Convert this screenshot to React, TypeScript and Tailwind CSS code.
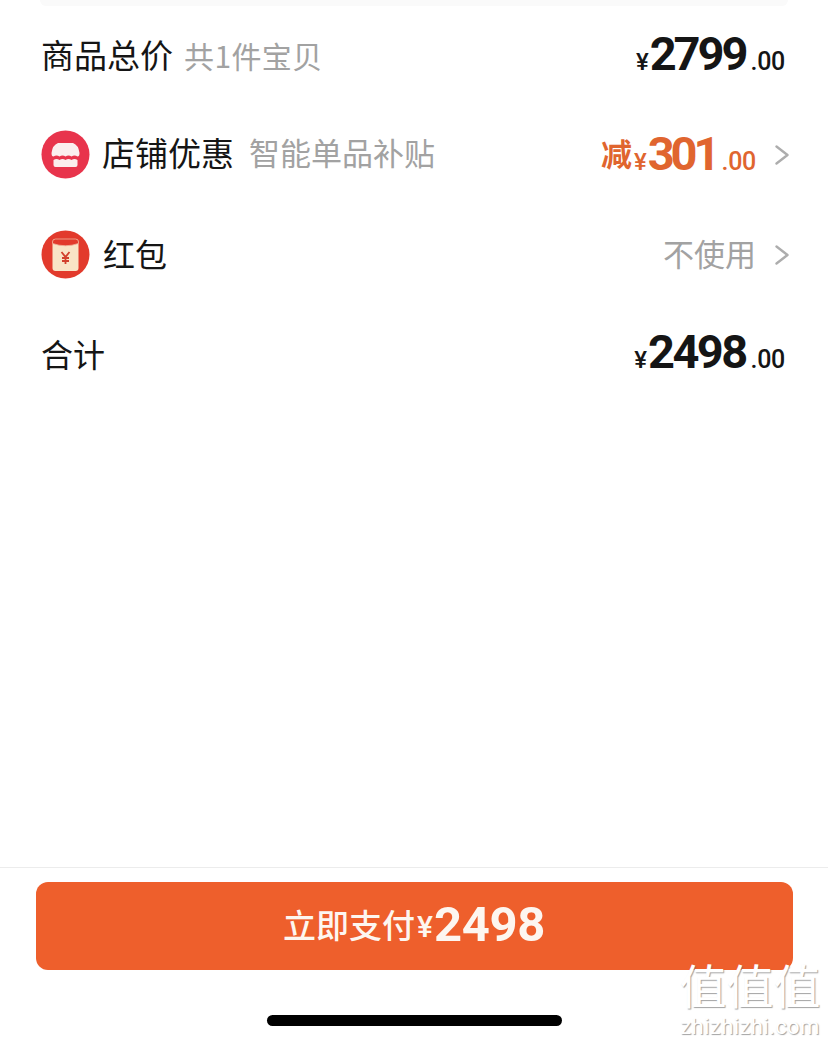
const cjk = "font-['Noto_Sans_CJK_SC',sans-serif]";
const num = "font-['Roboto','Noto_Sans_CJK_SC',sans-serif]";

function Chevron() {
  return (
    <svg width="14" height="24" viewBox="0 0 14 24" fill="none" className="ml-[19px]">
      <path d="M1.5 3.5 L12.5 12 L1.5 20.5" stroke="#adadad" strokeWidth="2.4" strokeLinecap="round" strokeLinejoin="round" />
    </svg>
  );
}

function ShopIcon() {
  return (
    <svg width="50" height="50" viewBox="0 0 50 50">
      <circle cx="24.5" cy="24.5" r="24" fill="#e8344c" />
      <path d="M17 13 H32 Q37.5 15 38.5 23 Q38.5 26.5 36.5 26.5 Q33.5 24.5 30.5 26.5 Q27.5 24.5 24.5 26.5 Q21.5 24.5 18.5 26.5 Q15.5 24.5 12.5 26.5 Q10.5 26.5 10.5 23 Q11.5 15 17 13 Z" fill="#fbeeee" />
      <path d="M12.5 30 Q15.5 28 18.5 30 Q21.5 28 24.5 30 Q27.5 28 30.5 30 Q33.5 28 36.5 30 V35 Q36.5 37 34.5 37 H14.5 Q12.5 37 12.5 35 Z" fill="#fbeeee" />
    </svg>
  );
}

function RedPacketIcon() {
  return (
    <svg width="50" height="50" viewBox="0 0 50 50">
      <circle cx="24.5" cy="24.5" r="24" fill="#e23a2c" />
      <rect x="11.5" y="9" width="26" height="32" rx="3" fill="#f9e4c6" />
      <path d="M11.5 12 Q11.5 9 14.5 9 H34.5 Q37.5 9 37.5 12 V13.5 Q24.5 18 11.5 13.5 Z" fill="#e23a2c" stroke="#f0b39a" strokeWidth="0.8" />
      <path d="M20.5 22 L24.5 27 L28.5 22 M24.5 27 V34 M21 28 H28 M21 31 H28" stroke="#d2402c" strokeWidth="1.8" fill="none" />
    </svg>
  );
}

function Price({ int, color, className, digits }: { int: string; color: string; className: string; digits: string }) {
  return (
    <span className={`flex items-baseline ${num} font-bold ${color} ${className}`}>
      <span className="text-[24px] font-medium">¥</span>
      <span className={`text-[47px] leading-none ml-[1px] ${digits}`}>{int}</span>
      <span className="text-[25px] font-medium leading-none tracking-[-0.3px]">.00</span>
    </span>
  );
}

export default function App() {
  return (
    <div className={`relative w-[828px] h-[1043px] bg-white overflow-hidden flex flex-col ${cjk}`}>
      <div className="h-[6px] mx-[40px] bg-[#fafafa] rounded-b-[10px] mb-[2px]" />

      <div className="h-[97px] pl-[41px] pr-[43px] flex items-center justify-between">
        <div className="flex items-center mb-[3px]">
          <span className="text-[33px] text-[#151515]">商品总价</span>
          <span className="text-[30px] tracking-[0.4px] text-[#a2a2a2] ml-[11px]">共1件宝贝</span>
        </div>
        <Price int="2799" color="text-[#151515]" className="mb-[4px]" digits="tracking-[-3px] mr-[5px]" />
      </div>

      <div className="h-[100px] pl-[41px] pr-[39px] flex items-center justify-between">
        <div className="flex items-center">
          <ShopIcon />
          <span className="text-[33px] text-[#151515] ml-[11px] mb-[5px]">店铺优惠</span>
          <span className="text-[31px] text-[#a2a2a2] ml-[15px] mb-[5px]">智能单品补贴</span>
        </div>
        <div className="flex items-center">
          <span className="text-[31px] font-bold text-[#e0652f] mb-[3px] mr-[2px]">减</span>
          <Price int="301" color="text-[#e0652f]" className="mb-[1px]" digits="tracking-[-4px] mr-[5px]" />
          <Chevron />
        </div>
      </div>

      <div className="h-[100px] pl-[41px] pr-[39px] flex items-center justify-between">
        <div className="flex items-center">
          <RedPacketIcon />
          <span className="text-[32px] text-[#151515] ml-[12px] mb-[4px]">红包</span>
        </div>
        <div className="flex items-center">
          <span className="text-[31px] text-[#a2a2a2] mb-[4px]">不使用</span>
          <Chevron />
        </div>
      </div>

      <div className="h-[100px] pl-[41px] pr-[43px] flex items-center justify-between">
        <span className="text-[32px] text-[#151515] mb-[4px]">合计</span>
        <Price int="2498" color="text-[#151515]" className="mb-[4px]" digits="tracking-[-2.6px] mr-[5px]" />
      </div>

      <div className="flex-1" />

      <div className="border-t border-[#ececec] h-[176px] flex flex-col items-center">
        <div className="mt-[14px] w-[757px] h-[88px] rounded-[12px] bg-[#ee5f2c] flex items-center justify-center text-[#fdf6f0] font-medium">
          <span className="text-[33px] mb-[2px]">立即支付</span>
          <span className={`text-[30px] ml-[2px] ${num}`}>¥</span>
          <span className={`text-[49px] font-bold tracking-[-0.4px] ml-[1px] mb-[2px] ${num}`}>2498</span>
        </div>
        <div className="mt-[45px] w-[295px] h-[11px] rounded-full bg-black" />
      </div>

      <div className="absolute left-[675px] top-[965px] w-[150px] flex flex-col items-center text-white [text-shadow:1px_1px_1px_rgba(100,100,100,0.6)]">
        <span className="text-[47px] leading-[46px] whitespace-nowrap font-['Liberation_Sans','Noto_Sans_CJK_SC',sans-serif]">值值值</span>
        <span className="text-[22px] leading-[24px] mt-[4px] whitespace-nowrap font-['Roboto',sans-serif] tracking-[0.4px]">zhizhizhi.com</span>
      </div>
    </div>
  );
}
